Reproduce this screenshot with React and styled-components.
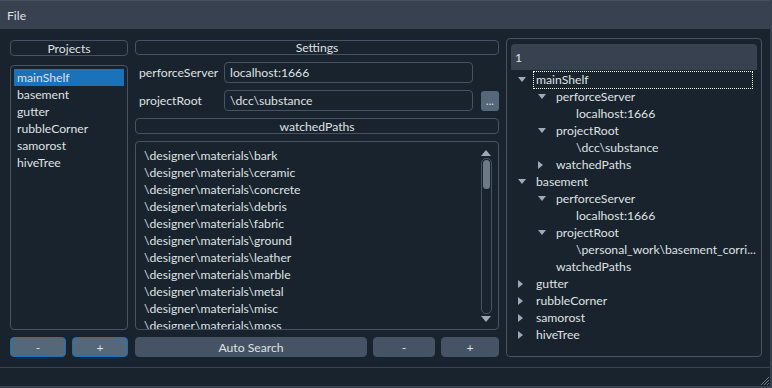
import React from "react";
import styled, { createGlobalStyle } from "styled-components";

const GlobalStyle = createGlobalStyle`
    html, body {
        margin: 0;
        padding: 0;
        background: #19232d;
    }
    body {
        font-family: "Segoe UI", Lato, "Noto Sans", sans-serif;
        font-size: 12.2px;
        color: #dfe1e2;
    }
`;

const Window = styled.div`
    width: 772px;
    height: 388px;
    display: flex;
    flex-direction: column;
    background: #19232d;
    box-sizing: border-box;
    border-right: 2px solid #37414f;
    overflow: hidden;
`;

const MenuBar = styled.div`
    height: 29px;
    flex: none;
    display: flex;
    align-items: center;
    padding-left: 7px;
    background: #37414f;
    border-top: 1px solid #455364;
    box-sizing: border-box;
`;

const Main = styled.div`
    flex: 1;
    display: grid;
    grid-template-columns: 118px 364px 256px;
    column-gap: 7px;
    padding: 9px 0 10px 10px;
    min-height: 0;
`;

const Column = styled.div`
    display: flex;
    flex-direction: column;
    gap: 7px;
    min-height: 0;
    padding-top: ${(p) => p.$top || 0}px;
`;

const Header = styled.div`
    flex: none;
    border: 1px solid #455364;
    border-radius: 4px;
    display: flex;
    align-items: center;
    justify-content: center;
    box-sizing: border-box;
    height: ${(p) => p.$h || 16}px;
    margin-bottom: ${(p) => p.$mb || 0}px;
`;

const ListBox = styled.div`
    flex: 1;
    border: 1px solid #455364;
    border-radius: 4px;
    padding: ${(p) => p.$pad || "3px"};
    display: flex;
    flex-direction: column;
    overflow: hidden;
    position: relative;
    min-height: 0;
`;

const ListItem = styled.div`
    height: 17px;
    flex: none;
    line-height: 17px;
    padding-left: 3px;
    white-space: nowrap;
    background: ${(p) => (p.$selected ? "#1a72bb" : "transparent")};
`;

const ButtonRow = styled.div`
    display: flex;
    gap: ${(p) => p.$gap || 6}px;
    height: 20px;
    flex: none;
`;

const Button = styled.div`
    flex: ${(p) => (p.$w ? "none" : 1)};
    width: ${(p) => (p.$w ? p.$w + "px" : "auto")};
    display: flex;
    align-items: center;
    justify-content: center;
    background: ${(p) => (p.$focus ? "#54687a" : "#455364")};
    border: 1px solid ${(p) => (p.$focus ? "#1a72bb" : "#455364")};
    border-radius: 4px;
    box-sizing: border-box;
`;

const FormRow = styled.div`
    display: flex;
    align-items: center;
    height: 21px;
    flex: none;
`;

const Label = styled.div`
    width: 85px;
    padding-left: 4px;
    box-sizing: border-box;
    flex: none;
    margin-right: 4px;
`;

const Field = styled.div`
    width: 249px;
    height: 21px;
    border: 1px solid #455364;
    border-radius: 4px;
    box-sizing: border-box;
    display: flex;
    align-items: center;
    padding-left: 5px;
`;

const DotsButton = styled.div`
    width: 18px;
    height: 20px;
    margin-left: 8px;
    background: #54687a;
    border-radius: 3px;
    display: flex;
    align-items: center;
    justify-content: center;
    font-size: 11px;
    line-height: 1;
`;

const ScrollBar = styled.div`
    position: absolute;
    right: 6px;
    top: 6px;
    bottom: 5px;
    width: 12px;
    display: flex;
    flex-direction: column;
    align-items: center;
`;

const Arrow = styled.div`
    width: 0;
    height: 0;
    flex: none;
    border-left: 5px solid transparent;
    border-right: 5px solid transparent;
    border-bottom: ${(p) => (p.$up ? "6px solid #9da9b5" : "none")};
    border-top: ${(p) => (p.$up ? "none" : "6px solid #9da9b5")};
    margin: 2px 0;
`;

const Track = styled.div`
    flex: 1;
    width: 11px;
    border: 1px solid #455364;
    border-radius: 5px;
    box-sizing: border-box;
    padding: 1px;
`;

const Handle = styled.div`
    height: 29px;
    background: #6d7a84;
    border-radius: 4px;
`;

const TreeFrame = styled.div`
    flex: 1;
    border: 1px solid #455364;
    border-radius: 4px;
    padding: 5px 4px;
    display: flex;
    flex-direction: column;
`;

const TreeHeader = styled.div`
    height: 26px;
    flex: none;
    background: #37414f;
    border-radius: 4px 4px 0 0;
    display: flex;
    align-items: center;
    padding-left: 4px;
    margin-bottom: 1px;
`;

const TreeRow = styled.div`
    height: 17px;
    flex: none;
    display: flex;
    align-items: center;
    padding-left: ${(p) => 6 + p.$level * 20}px;
    white-space: nowrap;
`;

const Toggle = styled.div`
    width: 17px;
    flex: none;
    display: flex;
    align-items: center;
    padding-left: 1px;
    box-sizing: border-box;
`;

const TreeText = styled.div`
    padding: 0 2px 0 2px;
    height: 16px;
    line-height: 16px;
    box-sizing: border-box;
    outline: ${(p) => (p.$focus ? "1px dotted #ffffff" : "none")};
    flex: ${(p) => (p.$focus ? 1 : "none")};
    margin-right: ${(p) => (p.$focus ? 5 : 0)}px;
`;

const StatusBar = styled.div`
    height: 21px;
    flex: none;
    border-top: 1px solid #37414f;
    border-bottom: 2px solid #37414f;
    box-sizing: border-box;
    position: relative;
`;

const Grip = styled.svg`
    position: absolute;
    right: 0;
    bottom: 0;
`;

function Tri({ open }) {
    return open ? (
        <svg width="8" height="6" viewBox="0 0 8 6">
            <path d="M0 0 L8 0 L4 5 Z" fill="#9da9b5" />
        </svg>
    ) : (
        <svg width="6" height="8" viewBox="0 0 6 8">
            <path d="M0 0 L5 4 L0 8 Z" fill="#9da9b5" />
        </svg>
    );
}

const projects = ["mainShelf", "basement", "gutter", "rubbleCorner", "samorost", "hiveTree"];

const watched = [
    "bark",
    "ceramic",
    "concrete",
    "debris",
    "fabric",
    "ground",
    "leather",
    "marble",
    "metal",
    "misc",
    "moss",
];

const tree = [
    { level: 0, text: "mainShelf", toggle: "open", focus: true },
    { level: 1, text: "perforceServer", toggle: "open" },
    { level: 2, text: "localhost:1666" },
    { level: 1, text: "projectRoot", toggle: "open" },
    { level: 2, text: "\\dcc\\substance" },
    { level: 1, text: "watchedPaths", toggle: "closed" },
    { level: 0, text: "basement", toggle: "open" },
    { level: 1, text: "perforceServer", toggle: "open" },
    { level: 2, text: "localhost:1666" },
    { level: 1, text: "projectRoot", toggle: "open" },
    { level: 2, text: "\\personal_work\\basement_corri..." },
    { level: 1, text: "watchedPaths" },
    { level: 0, text: "gutter", toggle: "closed" },
    { level: 0, text: "rubbleCorner", toggle: "closed" },
    { level: 0, text: "samorost", toggle: "closed" },
    { level: 0, text: "hiveTree", toggle: "closed" },
];

export default function App() {
    return (
        <>
            <GlobalStyle />
            <Window>
                <MenuBar>File</MenuBar>
                <Main>
                    <Column $top={2}>
                        <Header $mb={2}>Projects</Header>
                        <ListBox $pad="3px 3px 3px 3px">
                            {projects.map((p, i) => (
                                <ListItem key={p} $selected={i === 0}>
                                    {p}
                                </ListItem>
                            ))}
                        </ListBox>
                        <ButtonRow>
                            <Button $focus>-</Button>
                            <Button $focus>+</Button>
                        </ButtonRow>
                    </Column>
                    <Column $top={2}>
                        <Header $h={15}>Settings</Header>
                        <FormRow>
                            <Label>perforceServer</Label>
                            <Field>localhost:1666</Field>
                        </FormRow>
                        <FormRow>
                            <Label>projectRoot</Label>
                            <Field>\dcc\substance</Field>
                            <DotsButton>...</DotsButton>
                        </FormRow>
                        <Header>watchedPaths</Header>
                        <ListBox $pad="5px 3px 3px 5px">
                            {watched.map((w) => (
                                <ListItem key={w}>\designer\materials\{w}</ListItem>
                            ))}
                            <ScrollBar>
                                <Arrow $up />
                                <Track>
                                    <Handle />
                                </Track>
                                <Arrow />
                            </ScrollBar>
                        </ListBox>
                        <ButtonRow $gap={6}>
                            <Button $w={232}>Auto Search</Button>
                            <Button $w={62}>-</Button>
                            <Button $w={58}>+</Button>
                        </ButtonRow>
                    </Column>
                    <Column>
                        <TreeFrame>
                            <TreeHeader>1</TreeHeader>
                            {tree.map((n, i) => (
                                <TreeRow key={i} $level={n.level}>
                                    <Toggle>
                                        {n.toggle && <Tri open={n.toggle === "open"} />}
                                    </Toggle>
                                    <TreeText $focus={n.focus}>{n.text}</TreeText>
                                </TreeRow>
                            ))}
                        </TreeFrame>
                    </Column>
                </Main>
                <StatusBar>
                    <Grip width="12" height="12" viewBox="0 0 12 12">
                        <path d="M11 3 L3 11 M11 6 L6 11 M11 9 L9 11" stroke="#6d7a84" strokeWidth="1" />
                    </Grip>
                </StatusBar>
            </Window>
        </>
    );
}
